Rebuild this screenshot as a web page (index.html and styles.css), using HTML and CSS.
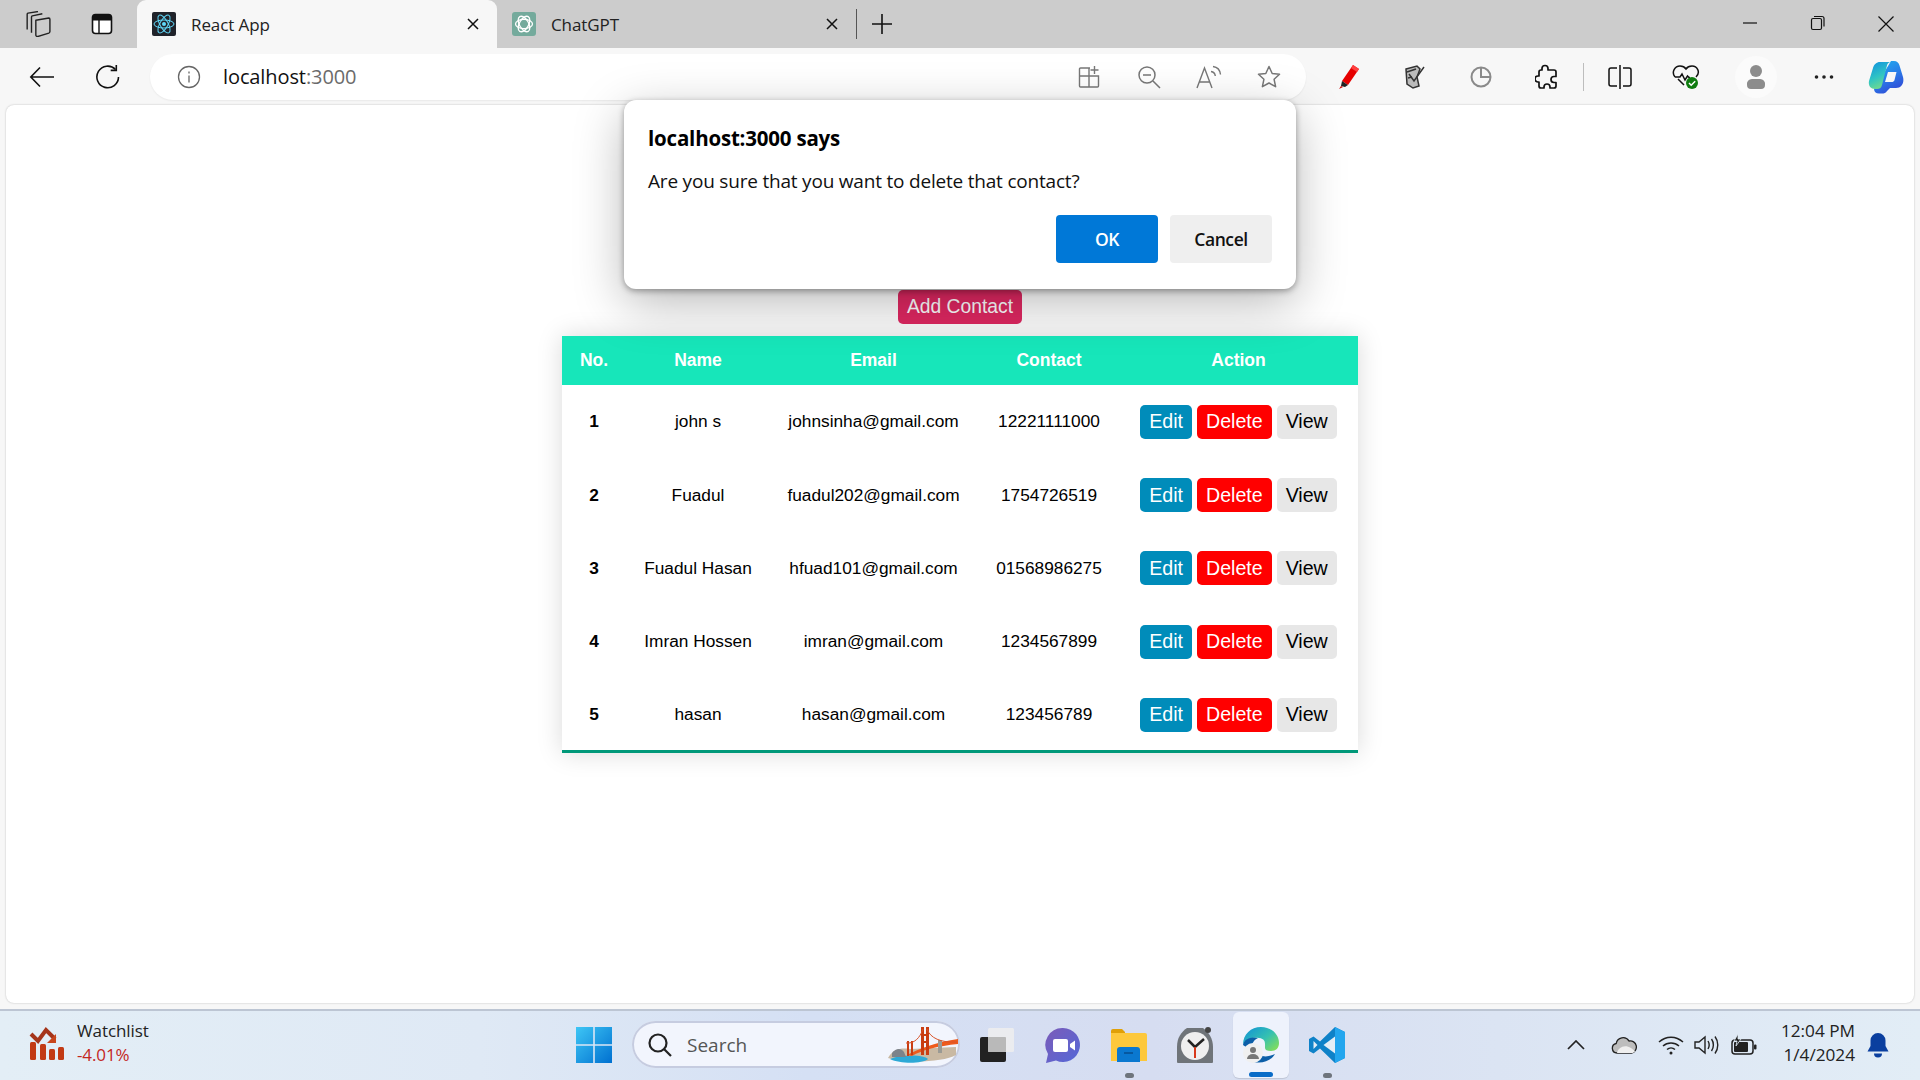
FILE: index.html
```html
<!DOCTYPE html>
<html lang="en">
<head>
    <meta charset="UTF-8">
    <title>React App</title>
    <link rel="stylesheet" href="styles.css">
</head>
<body>
    <!--tab strip-->
    <div class="tabstrip">
        <div class="strip-btn">
            <svg width="26" height="26" viewBox="0 0 24 24" fill="none" stroke="#222" stroke-width="1.3" stroke-linejoin="round"><path d="M10 8.500L22 6.500a1 1 0 0 1 1 1V19a1.500 1.500 0 0 1-1 1.400L12 23.500a1.500 1.500 0 0 1-2-1.500z"/><path d="M6 20V5.500a1 1 0 0 1 .8-1L16 2.500"/><path d="M2 17V3a1 1 0 0 1 .8-1L12 .5"/></svg>
        </div>
        <div class="strip-btn">
            <svg width="22" height="22" viewBox="0 0 22 22"><rect x="1.5" y="1.5" width="19" height="19" rx="3" fill="#fff" stroke="#111" stroke-width="1.6"/><path d="M1.5 4.5a3 3 0 0 1 3-3h13a3 3 0 0 1 3 3v3h-19z" fill="#111"/><path d="M8 7v13" stroke="#111" stroke-width="1.4"/></svg>
        </div>
        <div class="tab tab-active">
            <svg class="favicon" width="24" height="24" viewBox="0 0 24 24"><rect width="24" height="24" rx="2" fill="#20232a"/><g fill="none" stroke="#61dafb" stroke-width="1"><ellipse cx="12" cy="12" rx="10" ry="4"/><ellipse cx="12" cy="12" rx="10" ry="4" transform="rotate(60 12 12)"/><ellipse cx="12" cy="12" rx="10" ry="4" transform="rotate(120 12 12)"/></g><circle cx="12" cy="12" r="2" fill="#61dafb"/></svg>
            <span class="tab-title">React App</span>
            <svg class="tab-close" width="14" height="14" viewBox="0 0 14 14" stroke="#111" stroke-width="1.5"><path d="M2 2l10 10M12 2L2 12"/></svg>
        </div>
        <div class="tab">
            <svg class="favicon" width="24" height="24" viewBox="0 0 24 24"><rect width="24" height="24" rx="3" fill="#74aa9c"/><g fill="none" stroke="#fff" stroke-width="1.3"><ellipse cx="12" cy="12" rx="8.5" ry="4.6"/><ellipse cx="12" cy="12" rx="8.5" ry="4.6" transform="rotate(60 12 12)"/><ellipse cx="12" cy="12" rx="8.5" ry="4.6" transform="rotate(120 12 12)"/></g></svg>
            <span class="tab-title">ChatGPT</span>
            <svg class="tab-close" width="14" height="14" viewBox="0 0 14 14" stroke="#111" stroke-width="1.5"><path d="M2 2l10 10M12 2L2 12"/></svg>
        </div>
        <div class="tab-sep"></div>
        <svg class="new-tab" width="22" height="22" viewBox="0 0 22 22" stroke="#111" stroke-width="1.6"><path d="M11 1v20M1 11h20"/></svg>
        <div class="win-controls">
            <div class="win-btn"><svg width="16" height="16" viewBox="0 0 16 16" stroke="#111" stroke-width="1.2"><path d="M1 8h14"/></svg></div>
            <div class="win-btn"><svg width="16" height="16" viewBox="0 0 16 16" fill="none" stroke="#111" stroke-width="1.2"><rect x="1.5" y="3.5" width="10" height="11" rx="1.5"/><path d="M4 1.5h8a2 2 0 0 1 2 2v8"/></svg></div>
            <div class="win-btn"><svg width="18" height="18" viewBox="0 0 18 18" stroke="#111" stroke-width="1.2"><path d="M1.5 1.5l15 15M16.5 1.5l-15 15"/></svg></div>
        </div>
    </div>

    <!--address bar row-->
    <div class="toolbar">
        <div class="nav-btn">
            <svg width="26" height="22" viewBox="0 0 26 22" fill="none" stroke="#111" stroke-width="1.6"><path d="M25 11H2M11 1.5L1.8 11l9.2 9.5"/></svg>
        </div>
        <div class="nav-btn">
            <svg width="26" height="26" viewBox="0 0 26 26" fill="none" stroke="#111" stroke-width="1.6"><path d="M20.5 5.5A10.8 10.8 0 1 0 23.5 13"/><path d="M21.3 1v5.4h-5.6"/></svg>
        </div>
        <div class="address">
            <svg class="addr-info" width="24" height="24" viewBox="0 0 24 24" fill="none" stroke="#666" stroke-width="1.3"><circle cx="12" cy="12" r="10.5"/><path d="M12 10.5v7M12 6.5v2"/></svg>
            <span class="addr-text">localhost<span class="addr-port">:3000</span></span>
            <div class="addr-icons">
                <div class="addr-btn"><svg width="24" height="24" viewBox="0 0 24 24" fill="none" stroke="#777" stroke-width="1.4"><path d="M13 3H3.5a1 1 0 0 0-1 1v17a1 1 0 0 0 1 1h17a1 1 0 0 0 1-1V11H2.5M12 3v19M17.5 1v8M13.5 5h8"/></svg></div>
                <div class="addr-btn"><svg width="24" height="24" viewBox="0 0 24 24" fill="none" stroke="#777" stroke-width="1.5"><circle cx="10" cy="10" r="8"/><path d="M16 16l7 7M6 10h8"/></svg></div>
                <div class="addr-btn"><svg width="26" height="24" viewBox="0 0 26 24" fill="none" stroke="#777" stroke-width="1.4"><path d="M1 23L8.500 3l7.500 20M3.500 17h10M15 6.500c2.500.3 4 2 4.300 4.500M17 1.500c4 .5 7 3.500 7.500 8"/></svg></div>
                <div class="addr-btn"><svg width="24" height="24" viewBox="0 0 24 24" fill="none" stroke="#777" stroke-width="1.5" stroke-linejoin="round"><path d="M12 1.500l3.200 7 7.300.8-5.400 5 1.500 7.400L12 18l-6.600 3.700 1.500-7.400-5.400-5 7.300-.8z"/></svg></div>
            </div>
        </div>
        <div class="tool-btn">
            <svg width="22" height="26" viewBox="0 0 22 26"><path d="M15 1l6 4-11 16-6-4z" fill="#e60000"/><path d="M15 1l6 4-2 3-6-4z" fill="#ff4040"/><path d="M4 17l6 4-3 2-4-1z" fill="#222"/><path d="M3 22l2 1-4 2z" fill="#c00"/></svg>
        </div>
        <div class="tool-btn">
            <svg width="24" height="24" viewBox="0 0 24 24" fill="none" stroke="#333" stroke-width="1.5"><path d="M3 4l11-3 3 3-3 8 2 9-6 2-6-4z" fill="#bbb"/><path d="M6 9l5 7 10-14"/><path d="M4 7l9-3M5 13l4-1"/></svg>
        </div>
        <div class="tool-btn">
            <svg width="22" height="22" viewBox="0 0 22 22" fill="none" stroke="#8a8a8a" stroke-width="2"><circle cx="11" cy="11" r="9.500"/><path d="M11 2v9h9"/></svg>
        </div>
        <div class="tool-btn">
            <svg width="24" height="26" viewBox="0 0 24 26" fill="none" stroke="#111" stroke-width="1.7" stroke-linejoin="round"><path d="M10 1.500a3 3 0 0 1 3 3V6h6a2 2 0 0 1 2 2v4.500h-2a3 3 0 0 0 0 6h2V22a2 2 0 0 1-2 2h-4v-1a3 3 0 0 0-6 0v1H6a2 2 0 0 1-2-2v-4H3a3 3 0 0 1 0-6h1V8a2 2 0 0 1 2-2h1V4.500a3 3 0 0 1 3-3z"/></svg>
        </div>
        <div class="tool-sep"></div>
        <div class="tool-btn">
            <svg width="24" height="26" viewBox="0 0 24 26" fill="none" stroke="#111" stroke-width="1.5"><path d="M9 4H3a2 2 0 0 0-2 2v14a2 2 0 0 0 2 2h6M15 4h6a2 2 0 0 1 2 2v14a2 2 0 0 1-2 2h-6M12 1v24"/></svg>
        </div>
        <div class="tool-btn">
            <svg width="28" height="26" viewBox="0 0 28 26"><path d="M3 13C-1 8 3 2 8 2c3 0 5 1.500 6 3 1-1.500 3-3 6-3 5 0 9 6 4 11M3 13h5l2-3 3 6 2.500-4 1.500 1.500h1M6 15l6 6" fill="none" stroke="#111" stroke-width="1.500"/><circle cx="20" cy="19" r="6" fill="#107c10"/><path d="M17 19l2.200 2.200 4-4" fill="none" stroke="#fff" stroke-width="1.500"/></svg>
        </div>
        <div class="tool-btn profile">
            <div class="avatar"><svg width="22" height="26" viewBox="0 0 22 26" fill="#8c8c8c"><circle cx="11" cy="7" r="6"/><path d="M2 21a5 5 0 0 1 5-6h8a5 5 0 0 1 5 6 4 4 0 0 1-4 4H6a4 4 0 0 1-4-4z"/></svg></div>
        </div>
        <div class="tool-btn dots">
            <svg width="20" height="6" viewBox="0 0 20 6" fill="#222"><circle cx="2.500" cy="3" r="1.800"/><circle cx="10" cy="3" r="1.800"/><circle cx="17.500" cy="3" r="1.800"/></svg>
        </div>
        <div class="tool-btn copilot">
            <svg width="36" height="34" viewBox="0 0 36 34"><defs><linearGradient id="copA" x1="0" y1="0" x2=".4" y2="1"><stop offset="0" stop-color="#0f8fe0"/><stop offset=".6" stop-color="#2fc4c4"/><stop offset="1" stop-color="#6fd98f"/></linearGradient><linearGradient id="copB" x1="0" y1="0" x2=".5" y2="1"><stop offset="0" stop-color="#1fb6f0"/><stop offset=".6" stop-color="#2a7be8"/><stop offset="1" stop-color="#3050d8"/></linearGradient></defs><path d="M23 1h3c3 0 4.500 1.500 5.500 4.500L35 17c1.500 6-1.500 11-7 11h-6l-3 3c-1 2-3 2.500-5 2.500h-3c-3 0-4.500-1.500-5-4z" fill="url(#copB)"/><path d="M12 2h11c-2 0-3.500 1.500-4 3.500L14 25c-.8 3-2.500 4-5 4H7c-4 0-7-3-6-8L5 8c1-3.500 3.500-6 7-6z" fill="url(#copA)"/><path d="M20 12h8.500l-2 8c-.5 1.500-1.500 2-3 2H17z" fill="#f7f7f7"/></svg>
        </div>
    </div>

    <!--page-->
    <div class="content-wrap">
        <div class="page">
            <button class="add-btn">Add Contact</button>
            <table class="contact-table">
                <colgroup>
                    <col class="col-no"><col class="col-name"><col class="col-email"><col class="col-contact"><col class="col-action">
                </colgroup>
                <thead>
                    <tr><th>No.</th><th>Name</th><th>Email</th><th>Contact</th><th>Action</th></tr>
                </thead>
                <tbody>
                    <tr>
                        <th>1</th><td>john s</td><td>johnsinha@gmail.com</td><td>12221111000</td>
                        <td><div class="actions"><button class="btn btn-edit">Edit</button><button class="btn btn-delete">Delete</button><button class="btn btn-view">View</button></div></td>
                    </tr>
                    <tr>
                        <th>2</th><td>Fuadul</td><td>fuadul202@gmail.com</td><td>1754726519</td>
                        <td><div class="actions"><button class="btn btn-edit">Edit</button><button class="btn btn-delete">Delete</button><button class="btn btn-view">View</button></div></td>
                    </tr>
                    <tr>
                        <th>3</th><td>Fuadul Hasan</td><td>hfuad101@gmail.com</td><td>01568986275</td>
                        <td><div class="actions"><button class="btn btn-edit">Edit</button><button class="btn btn-delete">Delete</button><button class="btn btn-view">View</button></div></td>
                    </tr>
                    <tr>
                        <th>4</th><td>Imran Hossen</td><td>imran@gmail.com</td><td>1234567899</td>
                        <td><div class="actions"><button class="btn btn-edit">Edit</button><button class="btn btn-delete">Delete</button><button class="btn btn-view">View</button></div></td>
                    </tr>
                    <tr>
                        <th>5</th><td>hasan</td><td>hasan@gmail.com</td><td>123456789</td>
                        <td><div class="actions"><button class="btn btn-edit">Edit</button><button class="btn btn-delete">Delete</button><button class="btn btn-view">View</button></div></td>
                    </tr>
                </tbody>
            </table>
        </div>
    </div>

    <!--taskbar-->
    <div class="taskbar">
        <div class="tb-left">
            <svg width="36" height="36" viewBox="0 0 36 36"><path d="M2 9l7 7 8-11 9 9" fill="none" stroke="#a5351a" stroke-width="4"/><path d="M27 9v9h-9z" fill="#c8461c"/><g fill="#c23a14"><rect x="1" y="17" width="6" height="18" rx="1.500"/><rect x="11" y="19" width="6" height="16" rx="1.500"/><rect x="20" y="24" width="6" height="11" rx="1.500"/><rect x="29" y="22" width="6" height="13" rx="1.500"/></g></svg>
            <div class="widget-text">
                <div class="widget-title">Watchlist</div>
                <div class="widget-value">-4.01%</div>
            </div>
        </div>
        <div class="tb-center">
            <svg class="start-icon" width="36" height="36" viewBox="0 0 36 36"><defs><linearGradient id="winG" x1="0" y1="0" x2="1" y2="1"><stop offset="0" stop-color="#3ec6f5"/><stop offset="1" stop-color="#0070d0"/></linearGradient></defs><path d="M0 0h17.200v17.200H0zM18.800 0H36v17.200H18.800zM0 18.800h17.200V36H0zM18.800 18.800H36V36H18.800z" fill="url(#winG)"/></svg>
            <div class="search-pill">
                <svg width="26" height="26" viewBox="0 0 26 26" fill="none" stroke="#222" stroke-width="2.200"><circle cx="11" cy="11" r="8.500"/><path d="M17 17l7 7"/></svg>
                <span class="search-text">Search</span>
                <svg class="search-art" width="72" height="38" viewBox="0 0 72 38"><path d="M2 32c6-10 14-10 22-9l46-2v8c-12 7-50 9-68 3z" fill="#c9b9a3"/><path d="M4 33c14-5 34-4 38 0-6 5-28 5-38 0z" fill="#2ea9d6"/><path d="M6 27c4-5 9-5 12-1l2 5H6z" fill="#7c838a"/><path d="M21 29C34 22 52 16 72 13v5C52 20 36 24 26 30z" fill="#ee5a1c"/><g fill="#c93d12"><rect x="35" y="1" width="3" height="28"/><rect x="40" y="1" width="3" height="28"/><rect x="35" y="8" width="8" height="2"/><rect x="35" y="15" width="8" height="2"/><rect x="21" y="15" width="2" height="15"/><rect x="25" y="15" width="2" height="14"/></g><rect x="52" y="14" width="4" height="13" fill="#9a9a94"/><path d="M20 17C28 18 34 12 37 3M41 3c3 9 14 14 30 13" fill="none" stroke="#d9542a" stroke-width="1"/></svg>
            </div>
            <div class="app">
                <svg width="36" height="36" viewBox="0 0 36 36"><rect x="1" y="10" width="26" height="25" rx="2" fill="#222"/><rect x="9" y="1" width="26" height="24" rx="1.500" fill="#eee" fill-opacity=".85"/><rect x="9" y="10" width="18" height="15" rx="1" fill="#b9b9b9"/></svg>
            </div>
            <div class="app">
                <svg width="36" height="36" viewBox="0 0 36 36"><defs><linearGradient id="chatG" x1="0" y1="0" x2="1" y2="1"><stop offset="0" stop-color="#7b5bb8"/><stop offset="1" stop-color="#5468d8"/></linearGradient></defs><path d="M18 1a17 17 0 1 1-7 32.500L1 36l2-9A17 17 0 0 1 18 1z" fill="url(#chatG)"/><rect x="8" y="12" width="15" height="13" rx="2" fill="#fff"/><path d="M25 17l5-3.500v10L25 20z" fill="#fff"/></svg>
            </div>
            <div class="app">
                <svg width="36" height="36" viewBox="0 0 36 36"><path d="M0 4a2 2 0 0 1 2-2h9l3 3v5H0z" fill="#e0a008"/><path d="M0 6h34a2 2 0 0 1 2 2v26H0z" fill="#fdc83c"/><path d="M6 23a3 3 0 0 1 3-3h17a3 3 0 0 1 3 3v12H6z" fill="#0a78d0"/><path d="M13 26h9" stroke="#064e90" stroke-width="1.500"/></svg>
                <span class="app-dot"></span>
            </div>
            <div class="app">
                <svg width="36" height="38" viewBox="0 0 36 38"><path d="M10 2h16c6 4 10 11 10 19v15a1 1 0 0 1-1 1H1a1 1 0 0 1-1-1V21C0 12 4 6 10 2z" fill="#6f7479"/><circle cx="31" cy="4" r="3" fill="#444"/><circle cx="18" cy="20" r="14" fill="#efefef"/><path d="M18 21l-7-7M18 21l9-8" stroke="#222" stroke-width="2.500" fill="none"/><path d="M18 21v11" stroke="#d8391a" stroke-width="2"/></svg>
            </div>
            <div class="app app-active">
                <svg width="38" height="38" viewBox="0 0 38 38"><defs><linearGradient id="edgeG" x1="0" y1="0" x2="1" y2=".8"><stop offset="0" stop-color="#0f90d8"/><stop offset=".6" stop-color="#35c1b1"/><stop offset="1" stop-color="#7fdc5f"/></linearGradient></defs><path d="M1 19C1 8 9 1 19 1c11 0 18 8 18 16 0 5-3 8-8 8-4 0-6-1-6-3 0-5 1-9-6-10C10 11 3 13 1 19z" fill="url(#edgeG)"/><path d="M1 19C2 13 9 10 16 12c-5 2-7 7-6 13z" fill="#0c5fa8"/><path d="M12 36c8 2 17-1 21-8-6 3-12 3-15 1z" fill="#0c5fa8"/><circle cx="11" cy="27" r="10" fill="#f0f0f0"/><circle cx="11" cy="24" r="3" fill="#777"/><path d="M5 33a6 5 0 0 1 12 0z" fill="#777"/></svg>
                <span class="app-bar"></span>
            </div>
            <div class="app">
                <svg width="36" height="36" viewBox="0 0 36 36"><path d="M26 0l10 5v26l-10 5L11 21.500 4.500 26.500 0 24V12l4.500-2.500L11 14.500z" fill="#0f82c8"/><path d="M26 0l10 5v26l-10 5z" fill="#23a6ee"/><path d="M26 9.500v17L14.500 18z" fill="#e4eef6"/><path d="M4.500 14v8l4-4z" fill="#e4eef6"/></svg>
                <span class="app-dot"></span>
            </div>
        </div>
        <div class="tb-right">
            <div class="tray tray-chev"><svg width="18" height="10" viewBox="0 0 18 10" fill="none" stroke="#222" stroke-width="1.700"><path d="M1 9l8-8 8 8"/></svg></div>
            <div class="tray tray-cloud"><svg width="26" height="18" viewBox="0 0 26 18"><path d="M6 17a4.800 4.800 0 0 1-.8-9.500A7 7 0 0 1 18 5a5 5 0 0 1 2.500 12z" fill="#bdbdbd" stroke="#222" stroke-width="1.300"/><path d="M6 17c1-5 7-9 14-5l4 3c-.5 1.500-2 2-3.500 2z" fill="#efefef"/></svg></div>
            <div class="tray tray-wifi"><svg width="26" height="20" viewBox="0 0 26 20" fill="none" stroke="#222" stroke-width="1.500"><path d="M1 7c7-6.500 17-6.500 24 0M5 11c4.500-4 11.500-4 16 0M9 14.500c2.300-2 5.700-2 8 0"/><circle cx="13" cy="18" r="1.500" fill="#222" stroke="none"/></svg></div>
            <div class="tray tray-vol"><svg width="26" height="20" viewBox="0 0 26 20" fill="none" stroke="#222" stroke-width="1.400"><path d="M1 7v6h4l6 5V2L5 7z"/><path d="M14 6c1.500 2.500 1.500 5.500 0 8M17.500 4c2.500 3.500 2.500 8.500 0 12M21 1.500c3.700 5 3.700 12 0 17"/></svg></div>
            <div class="tray tray-batt"><svg width="26" height="22" viewBox="0 0 26 22"><rect x="1" y="6" width="21" height="14" rx="3" fill="none" stroke="#222" stroke-width="1.500"/><rect x="3" y="8" width="14" height="10" rx="1" fill="#222"/><rect x="23" y="10.500" width="2.500" height="5" rx="1" fill="#222"/><path d="M7 0L3 7h3l-1 5 5-7H7z" fill="#222" stroke="#e2edf6" stroke-width=".8"/></svg></div>
            <div class="clock">
                <div>12:04 PM</div>
                <div>1/4/2024</div>
            </div>
            <div class="tray tray-bell"><svg width="22" height="26" viewBox="0 0 22 26" fill="#0a3f9f"><path d="M11 1a7.500 7.500 0 0 1 7.500 7.500V14l3 5.500H.5l3-5.500V8.500A7.500 7.500 0 0 1 11 1z"/><path d="M7 21.500h8a4 4 0 0 1-8 0z"/></svg></div>
        </div>
    </div>

    <!--confirm dialog over the page-->
    <div class="dialog">
        <div class="dialog-title">localhost:3000 says</div>
        <div class="dialog-msg">Are you sure that you want to delete that contact?</div>
        <div class="dialog-btns">
            <button class="dlg-btn dlg-ok">OK</button>
            <button class="dlg-btn dlg-cancel">Cancel</button>
        </div>
    </div>
</body>
</html>
```

FILE: styles.css
```css
html, body {
    margin: 0;
    padding: 0;
}
body {
    width: 1920px;
    height: 1080px;
    overflow: hidden;
    font-family: "Open Sans", "Noto Sans", sans-serif;
    background-color: #f7f7f7;
    display: flex;
    flex-direction: column;
}
svg {
    display: block;
    flex-shrink: 0;
}

/* tab strip */
.tabstrip {
    height: 48px;
    background-color: #cccccc;
    display: flex;
    align-items: center;
    flex-shrink: 0;
}
.strip-btn {
    width: 64px;
    display: flex;
    justify-content: center;
}
.strip-btn:first-child {
    width: 76px;
}
.strip-btn:nth-child(2) {
    width: 52px;
}
.tab {
    height: 48px;
    width: 360px;
    display: flex;
    align-items: center;
    padding: 0 17px 0 15px;
    box-sizing: border-box;
    font-size: 17px;
    letter-spacing: -0.1px;
    color: #222;
}
.tab-active {
    margin-left: 9px;
    background-color: #f7f7f7;
    border-radius: 9px 9px 0 0;
}
.favicon {
    margin-right: 15px;
}
.tab-title {
    flex: 1;
}
.tab + .tab {
    width: 359px;
}
.tab-sep {
    width: 1px;
    height: 30px;
    background-color: #555;
    margin-left: 0;
}
.new-tab {
    margin-left: 14px;
}
.win-controls {
    margin-left: auto;
    display: flex;
    padding-right: 0;
}
.win-btn {
    width: 68px;
    display: flex;
    justify-content: center;
}

/* address bar row */
.toolbar {
    height: 57px;
    display: flex;
    align-items: center;
    flex-shrink: 0;
    padding-left: 9px;
    box-sizing: border-box;
}
.nav-btn {
    width: 66px;
    display: flex;
    justify-content: center;
}
.address {
    width: 1156px;
    height: 46px;
    margin-left: 9px;
    background-color: #fff;
    border-radius: 23px;
    display: flex;
    align-items: center;
    padding: 0 7px 0 27px;
    box-sizing: border-box;
    box-shadow: 0 1px 2px rgba(0, 0, 0, 0.06);
}
.addr-text {
    margin-left: 22px;
    font-size: 20px;
    color: #111;
    letter-spacing: -0.1px;
}
.addr-port {
    color: #6b6b6b;
}
.addr-icons {
    margin-left: auto;
    display: flex;
}
.addr-btn {
    width: 60px;
    display: flex;
    justify-content: center;
}
.tool-btn {
    width: 66px;
    display: flex;
    justify-content: center;
    align-items: center;
}
.address + .tool-btn {
    margin-left: 10px;
}
.tool-sep {
    width: 1px;
    height: 28px;
    background-color: #bdbdbd;
    margin: 0 3px;
}
.profile {
    margin-left: 4px;
}
.avatar {
    width: 42px;
    height: 42px;
    border-radius: 50%;
    background-color: #fbfbfb;
    display: flex;
    align-items: center;
    justify-content: center;
}
.dots {
    margin-left: 2px;
}
.copilot {
    margin-left: -4px;
}

/* page */
.content-wrap {
    height: 904px;
    padding: 0 6px 6px;
    box-sizing: border-box;
    flex-shrink: 0;
}
.page {
    height: 100%;
    background-color: #fff;
    border-radius: 8px;
    box-shadow: 0 0 2px rgba(0, 0, 0, 0.25);
    display: flex;
    flex-direction: column;
    align-items: center;
    padding-top: 185px;
    box-sizing: border-box;
    font-family: "Liberation Sans", Arial, sans-serif;
}
.add-btn {
    height: 34px;
    padding: 0 9px;
    border: none;
    border-radius: 5px;
    background-color: #e02862;
    color: #fff;
    font-family: inherit;
    font-size: 19.3px;
    margin-bottom: 12px;
}
.contact-table {
    width: 796px;
    table-layout: fixed;
    border-collapse: collapse;
    font-size: 17.3px;
    color: #000;
    box-shadow: 0 0 24px rgba(0, 0, 0, 0.15);
    border-bottom: 3px solid #009879;
}
.col-no { width: 64px; }
.col-name { width: 144px; }
.col-email { width: 207px; }
.col-contact { width: 144px; }
.col-action { width: 237px; }
.contact-table thead tr {
    height: 49px;
    background-color: #17e6ba;
    color: #fff;
    font-size: 17.5px;
}
.contact-table th, .contact-table td {
    padding: 0;
    text-align: center;
    white-space: nowrap;
}
.contact-table th:last-child, .contact-table td:last-child {
    padding-right: 2px;
}
.contact-table tbody tr {
    height: 73.4px;
}
.actions {
    display: flex;
    justify-content: center;
    gap: 5px;
}
.btn {
    height: 34px;
    padding: 0 9px;
    border: none;
    border-radius: 5px;
    font-family: inherit;
    font-size: 19.6px;
    color: #fff;
}
.btn-edit { background-color: #008cba; }
.btn-delete { background-color: #ff0000; }
.btn-view {
    background-color: #e7e7e7;
    color: #000;
}

/* taskbar */
.taskbar {
    height: 71px;
    flex: 1;
    border-top: 2px solid #bcc5d3;
    box-sizing: border-box;
    padding-bottom: 2px;
    background: linear-gradient(90deg, #e3eef6 0%, #dfe9f5 25%, #d5e0f4 42%, #d6ddf1 60%, #dbe4f3 78%, #e2edf6 100%);
    display: flex;
    align-items: center;
}
.tb-left {
    width: 576px;
    padding-left: 29px;
    padding-bottom: 3px;
    box-sizing: border-box;
    display: flex;
    align-items: center;
    gap: 12px;
    flex-shrink: 0;
}
.widget-text {
    font-size: 17px;
    letter-spacing: -0.1px;
    line-height: 24px;
    color: #222;
}
.widget-value {
    color: #c4261d;
}
.tb-center {
    display: flex;
    align-items: center;
    flex-shrink: 0;
}
.start-icon {
    margin-right: 20px;
}
.search-pill {
    width: 328px;
    height: 47px;
    border-radius: 24px;
    background-color: #f2f5fd;
    box-shadow: inset 0 0 0 2px #c6cce0;
    display: flex;
    align-items: center;
    padding-left: 15px;
    box-sizing: border-box;
    margin-right: 4px;
    position: relative;
}
.search-text {
    margin-left: 14px;
    font-size: 19px;
    color: #555;
}
.search-art {
    position: absolute;
    right: 2px;
    top: 5px;
}
.app {
    width: 66px;
    height: 68px;
    display: flex;
    align-items: center;
    justify-content: center;
    position: relative;
}
.app-dot {
    position: absolute;
    bottom: 1px;
    left: 29px;
    width: 9px;
    height: 5px;
    border-radius: 3px;
    background-color: #6e747c;
}
.app-active::before {
    content: "";
    position: absolute;
    left: 5px;
    right: 5px;
    top: 1px;
    bottom: 1px;
    border-radius: 6px;
    background-color: #eef2fc;
    box-shadow: 0 1px 1px rgba(0, 0, 0, 0.12);
}
.app-active svg {
    position: relative;
}
.app-bar {
    position: absolute;
    bottom: 2px;
    left: 21px;
    width: 24px;
    height: 5px;
    border-radius: 3px;
    background-color: #0a6cc8;
}
.tb-right {
    margin-left: auto;
    display: flex;
    align-items: center;
    padding-right: 31px;
}
.tray {
    display: flex;
    justify-content: center;
}
.tray-chev { width: 30px; }
.tray-cloud { width: 30px; margin-left: 18px; }
.tray-wifi { width: 30px; margin-left: 17px; }
.tray-vol { width: 30px; margin-left: 6px; }
.tray-batt { width: 30px; margin-left: 7px; }
.clock {
    width: 86px;
    margin-left: 10px;
    padding-bottom: 3px;
    font-size: 17.2px;
    line-height: 24px;
    text-align: right;
    color: #222;
}
.tray-bell {
    margin-left: 12px;
}

/* confirm dialog */
.dialog {
    position: absolute;
    left: 624px;
    top: 100px;
    width: 672px;
    height: 189px;
    box-sizing: border-box;
    padding: 24px 24px 0;
    background-color: #fff;
    border-radius: 12px;
    box-shadow: 0 2px 6px rgba(0, 0, 0, 0.35), 0 14px 50px rgba(0, 0, 0, 0.28);
    display: flex;
    flex-direction: column;
}
.dialog-title {
    font-size: 20.5px;
    font-weight: 700;
    letter-spacing: -0.2px;
    line-height: 28px;
    color: #000;
}
.dialog-msg {
    margin-top: 15px;
    font-size: 19px;
    letter-spacing: -0.2px;
    line-height: 28px;
    color: #111;
}
.dialog-btns {
    margin-top: 20px;
    display: flex;
    justify-content: flex-end;
    gap: 12px;
}
.dlg-btn {
    width: 102px;
    height: 48px;
    border: none;
    border-radius: 4px;
    font-family: inherit;
    font-size: 17.5px;
    font-weight: 600;
    letter-spacing: -0.4px;
}
.dlg-ok {
    background-color: #0078d7;
    color: #fff;
}
.dlg-cancel {
    background-color: #efefef;
    color: #111;
}
```
